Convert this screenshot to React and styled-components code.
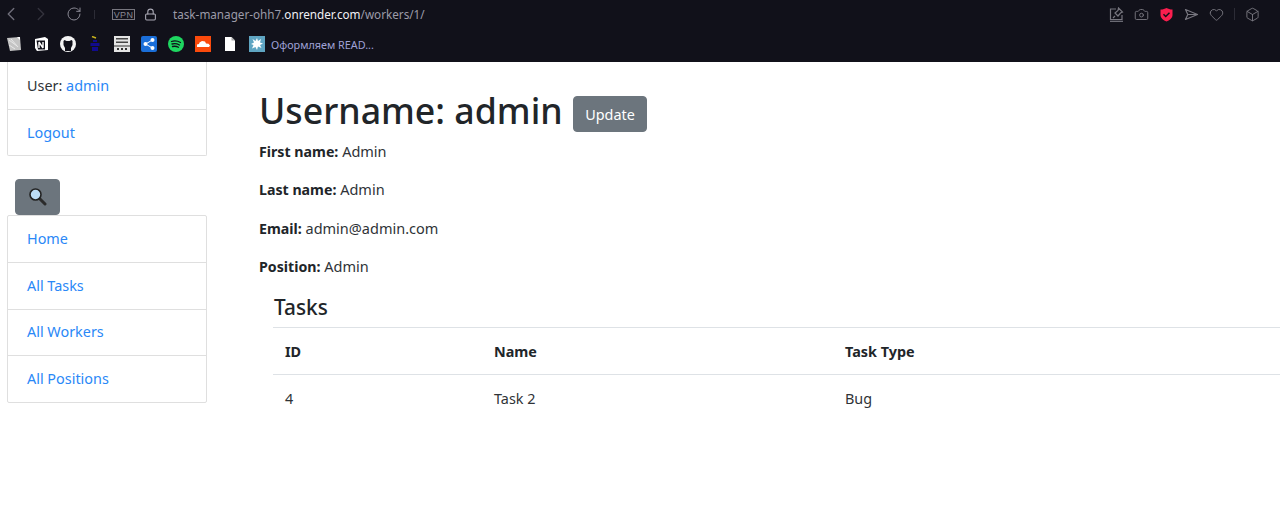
import React from 'react';
import styled, { createGlobalStyle } from 'styled-components';
import { ChevronLeft, ChevronRight, RotateCw, Lock, Camera, Heart, Box } from 'lucide-react';

const Global = createGlobalStyle`
    html, body { margin: 0; padding: 0; background: #fff; }
    body {
        font-family: "Noto Sans", "Open Sans", sans-serif;
        font-size: 14.4px;
        line-height: 24px;
        color: #2f3337;
    }
    * { box-sizing: border-box; }
    a { color: #2a88f7; text-decoration: none; }
`;

const Page = styled.div`
    width: 1280px;
    height: 517px;
    overflow: hidden;
`;
const Chrome = styled.div`
    height: 62px;
    background: #11111a;
    display: flex;
    flex-direction: column;
`;
const AddressBar = styled.div`
    height: 28px;
    display: flex;
    align-items: center;
    color: #6f6e7a;
`;
const NavIcon = styled.span`
    display: flex;
    width: ${(p) => p.$w}px;
    margin-left: ${(p) => p.$ml || 0}px;
    color: ${(p) => p.$color || '#6f6e7a'};
`;
const Dots = styled.span`
    width: 1px;
    height: ${(p) => p.$h || 9}px;
    margin-left: ${(p) => p.$ml || 0}px;
    background: #2c2c36;
`;
const Vpn = styled.span`
    border: 1px solid #77767f;
    font: 9px/10px "Liberation Sans", sans-serif;
    letter-spacing: 0.4px;
    text-align: center;
    color: #8a8994;
    width: 23px;
    height: 11px;
    margin-left: 17px;
`;
const Url = styled.span`
    margin-left: 15px;
    font: 11.7px "Noto Sans", sans-serif;
    color: #9c9ba8;
    b { font-weight: 400; color: #f0f0f4; }
`;
const Actions = styled.div`
    margin-left: auto;
    margin-right: 20px;
    display: flex;
    align-items: center;
    gap: 10px;
    color: #77767f;
`;
const Bookmarks = styled.div`
    height: 32px;
    display: flex;
    align-items: center;
    padding-left: 6px;
    gap: 11px;
`;
const BookmarkLabel = styled.span`
    font: 10.8px "Noto Sans", sans-serif;
    color: #9fa1d6;
    margin-left: -5px;
`;
const Main = styled.div`
    display: flex;
`;
const Sidebar = styled.div`
    width: 200px;
    margin-left: 7px;
    flex-shrink: 0;
`;
const ListGroup = styled.div`
    border: 1px solid #dfdfdf;
    border-top: ${(p) => (p.$flush ? 'none' : '1px solid #dfdfdf')};
    padding-top: ${(p) => (p.$flush ? '0.6px' : '0')};
    border-radius: ${(p) => (p.$flush ? '0 0 2px 2px' : '2px')};
    background: #fff;
`;
const ListItem = styled.div`
    height: 46.4px;
    padding: 0 19px;
    display: flex;
    align-items: center;
    white-space: pre;
    & + & { border-top: 1px solid #dfdfdf; }
`;
const SearchButton = styled.button`
    display: flex;
    align-items: center;
    justify-content: center;
    width: 45px;
    height: 36px;
    margin: 22.6px 0 0 8px;
    padding: 0;
    background: #6c757d;
    border: 1px solid #6c757d;
    border-radius: 4px;
`;
const Content = styled.div`
    flex: 1;
    padding-left: 52px;
    min-width: 0;
`;
const Heading = styled.div`
    display: flex;
    align-items: flex-end;
    height: 77px;
    padding-bottom: 6px;
    gap: 10px;
`;
const Title = styled.h1`
    margin: 0;
    font-size: 35.7px;
    line-height: 46px;
    font-weight: 500;
    color: #212529;
`;
const UpdateButton = styled.button`
    height: 36px;
    margin-bottom: 1px;
    padding: 0 11.5px;
    background: #6c757d;
    border: 1px solid #6c757d;
    border-radius: 4px;
    color: #fff;
    font: 14.4px "Noto Sans", sans-serif;
`;
const Detail = styled.p`
    margin: 0 0 14.3px;
    font-size: 14.5px;
    line-height: 24px;
    b { font-size: 14.2px; line-height: 1; font-weight: 700; color: #212529; }
`;
const Section = styled.div`
    margin: 6px 0 0 14px;
`;
const SectionTitle = styled.h2`
    margin: 0;
    padding: 0 0 5px 1px;
    font-size: 20.8px;
    line-height: 30px;
    font-weight: 500;
    color: #212529;
`;
const Row = styled.div`
    display: grid;
    grid-template-columns: 209px 351px 1fr;
    height: 47px;
    padding: 2px 0 0 12px;
    align-items: center;
    font-size: 14.4px;
    font-weight: ${(p) => (p.$head ? 700 : 400)};
    color: ${(p) => (p.$head ? '#212529' : 'inherit')};
    border-top: 1px solid #dee2e6;
`;

const Glyph = styled.svg`
    width: 15px;
    height: 15px;
    flex-shrink: 0;
`;
const Tile = styled.svg`
    flex-shrink: 0;
    width: 16px;
    height: 16px;
`;

const Magnifier = () => (
    <svg width="19" height="19" viewBox="0 0 19 19">
        <line x1="11.5" y1="11.5" x2="17" y2="17" stroke="#2b2b2b" strokeWidth="3" strokeLinecap="round" />
        <circle cx="7.5" cy="7.5" r="5.5" fill="#bcdcf5" stroke="#222" strokeWidth="1.6" />
    </svg>
);

const PinShare = () => (
    <Glyph viewBox="0 0 15 15" fill="none" stroke="currentColor" strokeWidth="1.2">
        <path d="M7 2H1.500v10.500H13V8" />
        <path d="M9.500 1l4 4-2 1-2.500 3-3-3 3-2.500zM6 9L4 11" />
        <path d="M1 14.300h13" />
    </Glyph>
);

const RedShield = () => (
    <Glyph viewBox="0 0 15 15">
        <path d="M1.500 2.500C4 2.500 6 1.800 7.500 1c1.500.8 3.500 1.500 6 1.500V8c0 3-3 5.500-6 6.500-3-1-6-3.500-6-6.500z" fill="#fa1e4e" />
        <path d="M4.500 7.300l2.200 2.200 3.800-3.800" fill="none" stroke="#11111a" strokeWidth="1.500" />
    </Glyph>
);

const Flow = () => (
    <Glyph viewBox="0 0 15 15" fill="none" stroke="currentColor" strokeWidth="1.2">
        <path d="M1.500 2.500L13.500 7.500 1.500 12.500 3.800 7.500zM3.800 7.500h9.700" strokeLinejoin="round" />
    </Glyph>
);

const BookmarkIcons = () => (
    <>
        <Tile viewBox="0 0 16 16">
            <path d="M1 2l13-1 1 13-11 1z" fill="#c4c4c4" />
            <path d="M3 4l8 6M5 3l7 8M3 9l6 4" stroke="#e8e8e8" />
            <path d="M11 1h3v3z" fill="#fff" />
        </Tile>
        <Tile viewBox="0 0 16 16">
            <path d="M2 3l10-2 3 2v11l-11 1-2-3z" fill="#fff" />
            <path d="M3.500 4.500h8.500v9h-7z" fill="#11111a" />
            <path d="M6 6v6M6 6l4 6M10 6v6" stroke="#fff" strokeWidth="1.400" />
        </Tile>
        <Tile viewBox="0 0 16 16">
            <circle cx="8" cy="8" r="8" fill="#f4f4f4" />
            <path d="M5 15v-3L3.500 9V5l1-1 2 1h3l2-1 1 1v4L11 12v3z" fill="#11111a" />
        </Tile>
        <Tile viewBox="0 0 16 16">
            <path d="M5 0.500l4 1.500" stroke="#c9b31d" strokeWidth="1.500" />
            <path d="M6 4h4v2H6zM3.500 7h9v3h-9zM5 11h6v4H5z" fill="#110b8e" />
        </Tile>
        <Tile viewBox="0 0 16 16">
            <rect width="16" height="16" fill="#e4e4e4" />
            <rect x="2" y="2" width="12" height="1.500" fill="#444" />
            <rect x="2" y="5.500" width="12" height="1.500" fill="#444" />
            <rect y="9.500" width="16" height="1" fill="#333" />
            <rect x="3" y="12" width="2" height="2" fill="#333" />
            <rect x="7" y="12" width="2" height="2" fill="#333" />
            <rect x="11" y="12" width="2" height="2" fill="#333" />
        </Tile>
        <Tile viewBox="0 0 16 16">
            <rect width="16" height="16" rx="2" fill="#1a6ed8" />
            <path d="M11.500 4L4.500 8l7 4" stroke="#fff" fill="none" />
            <circle cx="11.500" cy="4" r="2" fill="#fff" />
            <circle cx="4.500" cy="8" r="2" fill="#fff" />
            <circle cx="11.500" cy="12" r="2" fill="#fff" />
        </Tile>
        <Tile viewBox="0 0 16 16">
            <circle cx="8" cy="8" r="8" fill="#1ed760" />
            <path d="M3.500 5.500c3-1 6-.7 9 1M4 8c2.500-.7 5-.4 7.500 1M4.500 10.500c2-.5 4-.3 6 .8" stroke="#11111a" strokeWidth="1.300" fill="none" strokeLinecap="round" />
        </Tile>
        <Tile viewBox="0 0 16 16">
            <rect width="16" height="16" fill="#fb4a0c" />
            <path d="M2 11V8.500L4 8l.5-1.500L7 5l3 .5 1 2 2.500.3L15 9.500 14 11z" fill="#fff" />
        </Tile>
        <Tile viewBox="0 0 16 16">
            <path d="M3 1h6.500L13 4.500V15H3z" fill="#fff" />
            <path d="M9.500 1v3.500H13z" fill="#aaa" />
        </Tile>
        <Tile viewBox="0 0 16 16">
            <rect width="16" height="16" fill="#5fa5c2" />
            <path d="M8 2l1 3 3-2-1 3.500 3 1-3 1.500 1.500 3-3.500-1.500L8 14l-1.500-3L3 12.500 4.500 9 2 8l3-1.500L3.500 3 6.500 5z" fill="#fff" />
        </Tile>
    </>
);

const App = () => (
    <Page>
        <Global />
        <Chrome>
            <AddressBar>
                <NavIcon $w={30}><ChevronLeft size={22} strokeWidth={1.5} /></NavIcon>
                <NavIcon $w={36} $color="#34333d"><ChevronRight size={22} strokeWidth={1.5} /></NavIcon>
                <NavIcon $w={16} $color="#8a8994"><RotateCw size={16} strokeWidth={1.5} /></NavIcon>
                <Dots $ml={12} />
                <Vpn>VPN</Vpn>
                <NavIcon $w={14} $ml={9} $color="#a9a8b4"><Lock size={13} /></NavIcon>
                <Url>task-manager-ohh7.<b>onrender.com</b>/workers/1/</Url>
                <Actions>
                    <PinShare />
                    <Camera size={15} strokeWidth={1.5} />
                    <RedShield />
                    <Flow />
                    <Heart size={15} strokeWidth={1.5} />
                    <Dots $h={12} />
                    <Box size={15} strokeWidth={1.5} />
                </Actions>
            </AddressBar>
            <Bookmarks>
                <BookmarkIcons />
                <BookmarkLabel>Оформляем READ...</BookmarkLabel>
            </Bookmarks>
        </Chrome>
        <Main>
            <Sidebar>
                <ListGroup $flush>
                    <ListItem>User: <a href="#u">admin</a></ListItem>
                    <ListItem><a href="#l">Logout</a></ListItem>
                </ListGroup>
                <SearchButton><Magnifier /></SearchButton>
                <ListGroup>
                    <ListItem><a href="#h">Home</a></ListItem>
                    <ListItem><a href="#t">All Tasks</a></ListItem>
                    <ListItem><a href="#w">All Workers</a></ListItem>
                    <ListItem><a href="#p">All Positions</a></ListItem>
                </ListGroup>
            </Sidebar>
            <Content>
                <Heading>
                    <Title>Username: admin</Title>
                    <UpdateButton>Update</UpdateButton>
                </Heading>
                <Detail><b>First name:</b> Admin</Detail>
                <Detail><b>Last name:</b> Admin</Detail>
                <Detail><b>Email:</b> admin@admin.com</Detail>
                <Detail><b>Position:</b> Admin</Detail>
                <Section>
                    <SectionTitle>Tasks</SectionTitle>
                    <Row $head><span>ID</span><span>Name</span><span>Task Type</span></Row>
                    <Row><span>4</span><span>Task 2</span><span>Bug</span></Row>
                </Section>
            </Content>
        </Main>
    </Page>
);

export default App;
